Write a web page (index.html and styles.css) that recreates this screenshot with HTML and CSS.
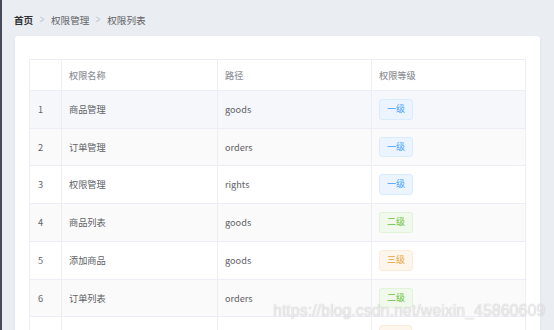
FILE: index.html
```html
<!DOCTYPE html>
<html lang="zh">
<head>
    <meta charset="UTF-8">
    <meta name="viewport" content="width=device-width, initial-scale=1.0">
    <title>权限列表</title>
    <link rel="stylesheet" href="styles.css">
</head>
<body>
    <div class="layout">
        <aside class="aside"></aside>
        <main class="main">
            <nav class="breadcrumb">
                <span class="crumb crumb-home">首页</span>
                <span class="sep">&gt;</span>
                <span class="crumb">权限管理</span>
                <span class="sep">&gt;</span>
                <span class="crumb">权限列表</span>
            </nav>

            <div class="card">
                <table class="rights-table">
                    <colgroup>
                        <col class="col-index">
                        <col class="col-name">
                        <col class="col-path">
                        <col class="col-level">
                    </colgroup>
                    <thead>
                        <tr>
                            <th></th>
                            <th>权限名称</th>
                            <th>路径</th>
                            <th>权限等级</th>
                        </tr>
                    </thead>
                    <tbody>
                        <tr class="hover">
                            <td>1</td><td>商品管理</td><td>goods</td>
                            <td><span class="tag">一级</span></td>
                        </tr>
                        <tr class="stripe">
                            <td>2</td><td>订单管理</td><td>orders</td>
                            <td><span class="tag">一级</span></td>
                        </tr>
                        <tr>
                            <td>3</td><td>权限管理</td><td>rights</td>
                            <td><span class="tag">一级</span></td>
                        </tr>
                        <tr class="stripe">
                            <td>4</td><td>商品列表</td><td>goods</td>
                            <td><span class="tag tag-success">二级</span></td>
                        </tr>
                        <tr>
                            <td>5</td><td>添加商品</td><td>goods</td>
                            <td><span class="tag tag-warning">三级</span></td>
                        </tr>
                        <tr class="stripe">
                            <td>6</td><td>订单列表</td><td>orders</td>
                            <td><span class="tag tag-success">二级</span></td>
                        </tr>
                        <tr>
                            <td></td><td></td><td></td>
                            <td><span class="tag tag-warning"></span></td>
                        </tr>
                    </tbody>
                </table>
            </div>
        </main>
    </div>

    <div class="watermark">https://blog.csdn.net/weixin_45860609</div>
</body>
</html>
```

FILE: styles.css
```css
/* General */
body {
    margin: 0;
    font-family: "Noto Sans CJK SC", "Noto Sans", sans-serif;
    background-color: #eaedf1;
    color: #606266;
    overflow: hidden;
}

.layout {
    display: flex;
    min-height: 330px;
}

.aside {
    width: 2px;
    background-color: #474b57;
}

.main {
    flex: 1;
    padding: 13px 14px 0 12px;
}

/* Breadcrumb */
.breadcrumb {
    display: flex;
    align-items: center;
    font-size: 9.6px;
    line-height: 14px;
    color: #606266;
}

.crumb-home {
    font-weight: bold;
    color: #303133;
}

.sep {
    margin: 0 6px;
    color: #c0c4cc;
    font-family: "Liberation Sans", sans-serif;
    font-size: 10px;
    transform: scaleX(0.75);
}

/* Card */
.card {
    margin-top: 9px;
    margin-left: 1px;
    background-color: #fff;
    border-radius: 3px;
    box-shadow: 0 1px 3px rgba(0, 0, 0, 0.06);
    padding: 23px 14px 14px 14px;
}

/* Table */
.rights-table {
    width: 100%;
    border-collapse: collapse;
    table-layout: fixed;
    font-size: 9.2px;
    border: 1px solid #ebeef5;
}

.col-index { width: 32px; }
.col-name { width: 156px; }
.col-path { width: 154px; }

th, td {
    border: 1px solid #ebeef5;
    padding: 8px 7px;
    text-align: left;
    white-space: nowrap;
}

th {
    color: #909399;
    font-weight: 500;
    line-height: 14px;
    background-color: #fff;
}

td {
    height: 20.7px;
    line-height: 20.7px;
    padding-top: 8px;
    padding-bottom: 8px;
    background-color: #fff;
    box-sizing: content-box;
}

td:first-child {
    padding-left: 8px;
}

tr.stripe td {
    background-color: #fafafa;
}

tr.hover td {
    background-color: #f5f7fa;
}

/* Tags */
.tag {
    display: inline-block;
    vertical-align: top;
    min-width: 33px;
    height: 20.7px;
    line-height: 18.7px;
    padding: 0 7px;
    font-size: 9px;
    border-radius: 3px;
    border: 1px solid #d9ecff;
    background-color: #ecf5ff;
    color: #409eff;
    box-sizing: border-box;
}

.tag-success {
    border-color: #e1f3d8;
    background-color: #f0f9eb;
    color: #67c23a;
}

.tag-warning {
    border-color: #faecd8;
    background-color: #fdf6ec;
    color: #e6a23c;
}

/* Watermark */
.watermark {
    position: fixed;
    left: 273px;
    top: 302px;
    font-family: "Liberation Sans", Arial, sans-serif;
    font-size: 16px;
    line-height: 18px;
    color: rgba(255, 255, 255, 0.75);
    text-shadow: 0 0 1px rgba(0, 0, 0, 0.35);
    white-space: nowrap;
}
```
